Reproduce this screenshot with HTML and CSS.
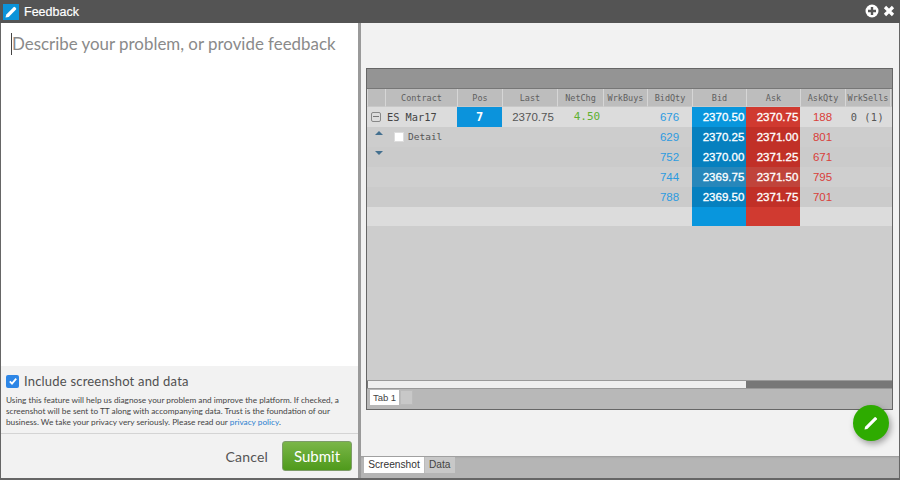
FILE: index.html
```html
<!DOCTYPE html>
<html lang="en">
<head>
<meta charset="utf-8">
<title>Feedback</title>
<link rel="stylesheet" href="styles.css">
</head>
<body>
<div class="window">
  <header class="titlebar">
    <span class="app-icon">
      <svg width="16" height="16" viewBox="0 0 16 16"><path d="M2.500 13.500l.8-3L10.600 3.200a1 1 0 0 1 1.400 0l1 1a1 1 0 0 1 0 1.400L5.700 12.900z" fill="#fff"/></svg>
    </span>
    <span class="title">Feedback</span>
    <span class="win-actions">
      <svg width="14" height="14" viewBox="0 0 14 14"><circle cx="7" cy="7" r="6.500" fill="#fff"/><path d="M7 3v8M3 7h8" stroke="#555" stroke-width="2.400"/></svg>
      <svg width="12" height="12" viewBox="0 0 12 12"><path d="M2 2l8 8M10 2l-8 8" stroke="#fff" stroke-width="3.200"/></svg>
    </span>
  </header>
  <div class="content">
    <section class="left">
      <div class="editor"><span class="placeholder">Describe your problem, or provide feedback</span></div>
      <div class="consent">
        <label class="check-row">
          <span class="checkbox"><svg width="12" height="12" viewBox="0 0 12 12"><path d="M2.800 6.300l2.200 2.300 4.200-5" fill="none" stroke="#fff" stroke-width="1.800"/></svg></span>
          <span>Include screenshot and data</span>
        </label>
        <p class="legal">Using this feature will help us diagnose your problem and improve the platform. If checked, a<br>screenshot will be sent to TT along with accompanying data. Trust is the foundation of our<br>business. We take your privacy very seriously. Please read our <a href="#">privacy policy</a>.</p>
      </div>
      <div class="actions">
        <span class="cancel">Cancel</span>
        <button class="submit">Submit</button>
      </div>
    </section>
    <section class="right">
      <div class="preview">
        <div class="shot">
          <div class="shot-top"></div>
          <div class="row head">
            <div></div><div>Contract</div><div>Pos</div><div>Last</div><div>NetChg</div><div>WrkBuys</div><div>BidQty</div><div>Bid</div><div>Ask</div><div>AskQty</div><div>WrkSells</div><div></div>
          </div>
          <div class="row light">
            <div class="expander"><span class="minus"></span></div><div class="contract">ES Mar17</div><div class="pos">7</div><div class="last">2370.75</div><div class="chg">4.50</div><div></div><div class="bq">676</div><div class="bid">2370.50</div><div class="ask">2370.75</div><div class="aq">188</div><div class="num">0 (1)</div><div></div>
          </div>
          <div class="row">
            <div class="expander"><span class="up"></span></div><div class="detail"><span class="box"></span>Detail</div><div></div><div></div><div></div><div></div><div class="bq">629</div><div class="bid dk">2370.25</div><div class="ask dk">2371.00</div><div class="aq">801</div><div></div><div></div>
          </div>
          <div class="row alt">
            <div class="expander"><span class="down"></span></div><div></div><div></div><div></div><div></div><div></div><div class="bq">752</div><div class="bid dk">2370.00</div><div class="ask dk">2371.25</div><div class="aq">671</div><div></div><div></div>
          </div>
          <div class="row dim">
            <div></div><div></div><div></div><div></div><div></div><div></div><div class="bq">744</div><div class="bid md">2369.75</div><div class="ask md">2371.50</div><div class="aq">795</div><div></div><div></div>
          </div>
          <div class="row alt">
            <div></div><div></div><div></div><div></div><div></div><div></div><div class="bq">788</div><div class="bid dk">2369.50</div><div class="ask dk">2371.75</div><div class="aq">701</div><div></div><div></div>
          </div>
          <div class="row light">
            <div></div><div></div><div></div><div></div><div></div><div></div><div></div><div class="bid"></div><div class="ask"></div><div></div><div></div><div></div>
          </div>
          <div class="shot-fill"></div>
          <div class="scroll"><span class="thumb"></span></div>
          <div class="shot-tabs"><span class="shot-tab">Tab 1</span><span class="shot-add"></span></div>
        </div>
      </div>
      <div class="tabs"><span class="tab active">Screenshot</span><span class="tab">Data</span></div>
      <button class="fab" aria-label="Edit">
        <svg width="18" height="18" viewBox="0 0 18 18"><path d="M2.500 15.500l.6-2.800L12.600 3.200a.8.8 0 0 1 1.100 0l1.100 1.100a.8.8 0 0 1 0 1.100L5.300 14.900z" fill="#fff"/></svg>
      </button>
    </section>
  </div>
</div>
</body>
</html>
```
FILE: styles.css
```css
* { box-sizing: border-box; }
html, body { margin: 0; height: 100%; overflow: hidden; }
.window { width: 900px; height: 480px; display: flex; flex-direction: column; background: #555; font-family: "Lato", sans-serif; }

.titlebar { height: 23px; flex: none; display: flex; align-items: center; background: #545454; color: #fff; padding: 0 3px; }
.app-icon { width: 16px; height: 16px; margin-right: 5px; background: #0b93d9; display: flex; }
.title { font: 12.500px "Liberation Sans", sans-serif; -webkit-text-stroke: .2px #fff; }
.win-actions { margin-left: auto; display: flex; align-items: center; gap: 4px; padding-right: 2px; margin-top: -1px; }

.content { flex: 1; display: flex; padding: 0 1px 2px 1px; background: #666; min-height: 0; }
.left { width: 357px; flex: none; display: flex; flex-direction: column; background: #fff; }
.editor { flex: 1; padding: 10px 0 0 10px; }
.placeholder { display: inline-block; height: 22px; line-height: 21px; border-left: 1px solid #444; color: #8a8a8a; font-size: 16.900px; white-space: nowrap; }
.consent { height: 68px; flex: none; background: #f2f2f2; padding: 8px 5px 0; border-bottom: 1px solid #d4d4d4; }
.check-row { display: flex; align-items: center; gap: 5px; font-size: 13px; letter-spacing: .2px; color: #505050; height: 14px; }
.checkbox { width: 13px; height: 13px; background: #2d86e6; border-radius: 2px; display: flex; align-items: center; justify-content: center; }
.legal { margin: 7px 0 0; font-size: 8.250px; line-height: 11px; color: #444; white-space: nowrap; }
.legal a { color: #2a7fd0; text-decoration: none; }
.actions { height: 44px; flex: none; background: #f2f2f2; display: flex; align-items: center; justify-content: flex-end; padding: 0 6px 0 0; gap: 14px; }
.cancel { font-size: 14px; color: #555; letter-spacing: .2px; }
.submit { width: 70px; height: 30px; padding: 0; font: 15px "Lato", sans-serif; color: #fff; border: 1px solid #7d9c68; border-radius: 3px; background: linear-gradient(#7ab648, #4f9a1c); }

.right { flex: 1; border-left: 3px solid #9a9a9a; position: relative; display: flex; flex-direction: column; background: #f2f2f2; min-width: 0; }
.preview { flex: 1; padding: 45px 6px 46px 5px; min-height: 0; }
.shot { height: 342px; border: 1px solid #666; background: #cdcdcd; display: flex; flex-direction: column; font: 10.300px "DejaVu Sans Mono", monospace; color: #555; }
.shot-top { height: 20px; flex: none; background: #949494; border-bottom: 1px solid #777; }
.row { display: grid; grid-template-columns: 18px 72px 45px 55px 46px 44px 45px 54px 54px 45px 45px 1fr; height: 20px; flex: none; align-items: stretch; background: #cdcdcd; }
.row > div { display: flex; align-items: center; justify-content: center; }
.head { height: 18px; background: #bdbdbd; font-size: 8.500px; color: #5f5f5f; }
.head > div { border-left: 1px solid #d6d6d6; border-bottom: 1px solid #c8c8c8; }
.light { background: #dcdcdc; height: 19.500px; }
.alt { background: #cbcbcb; }
.dim { background: #cfcfcf; }
.num { color: #555; letter-spacing: .5px; }
.last { font: 11.500px "Liberation Sans", sans-serif; color: #555; padding-left: 7px; }
.contract { justify-content: flex-start !important; padding-left: 2px; color: #444; }
.pos { background: #0b93dc; color: #fff; font-weight: bold; font-size: 12px; }
.chg { color: #5eb030; padding-left: 14px; font-size: 11px; }
.bq { color: #2d9be0; font-size: 11.500px; font-family: "Liberation Sans", sans-serif; }
.aq { color: #d9403a; font-size: 11.500px; font-family: "Liberation Sans", sans-serif; }
.bid, .ask { color: #fff; font-size: 11.500px; font-family: "Liberation Sans", sans-serif; -webkit-text-stroke: .3px #fff; padding-left: 9px; }
.bid { background: #0896dd; }
.ask { background: #d03a30; }
.bid.dk { background: #0680bf; }
.ask.dk { background: #c13027; }
.bid.md { background: #2787bb; }
.ask.md { background: #c0443b; }
.detail { justify-content: flex-start !important; padding-left: 9px; gap: 3px; font-size: 9.500px; }
.box { width: 10px; height: 10px; background: #fff; border: 1px solid #ddd; margin-right: 1px; }
.minus { width: 10px; height: 10px; border: 1px solid #888; border-radius: 2px; background: #ddd; display: flex; align-items: center; justify-content: center; }
.minus::after { content: ""; width: 6px; height: 1px; background: #777; }
.up, .down { width: 0; height: 0; border-left: 4px solid transparent; border-right: 4px solid transparent; margin-left: 6px; }
.up { border-bottom: 4px solid #44708f; margin-top: -8px; }
.down { border-top: 4px solid #44708f; margin-top: -8px; }
.shot-fill { flex: 1; background: #cdcdcd; }
.scroll { height: 9px; flex: none; background: #777; border-top: 1px solid #999; border-bottom: 1px solid #999; }
.thumb { display: block; width: 378px; height: 7px; margin-left: 1px; background: #efefef; }
.shot-tabs { height: 20px; flex: none; background: #b8b8b8; display: flex; padding: 1px 0 0 3px; gap: 1px; }
.shot-tab { width: 29px; height: 15px; background: #fff; font: 9.500px/15px "Liberation Sans", sans-serif; text-align: center; color: #444; }
.shot-add { width: 13px; height: 15px; background: #c8c8c8; border: 1px solid #bbb; }

.tabs { height: 22px; flex: none; background: #b5b5b5; display: flex; padding: 0 0 0 3px; box-shadow: inset 0 2px 2px -1px #999; }
.tab { font: 10.200px/16px "Liberation Sans", sans-serif; color: #444; height: 16px; margin-top: 1px; padding: 0 4px; background: #c8c8c8; border-left: 1px solid #bbb; }
.tab.active { background: #fff; color: #333; width: 60px; padding: 0; text-align: center; border: 0; }
.fab { position: absolute; right: 10px; top: 382px; width: 36px; height: 36px; padding: 0; border: 0; border-radius: 50%; background: #2eab00; box-shadow: 2px 3px 6px rgba(0,0,0,.35); display: flex; align-items: center; justify-content: center; }
```
